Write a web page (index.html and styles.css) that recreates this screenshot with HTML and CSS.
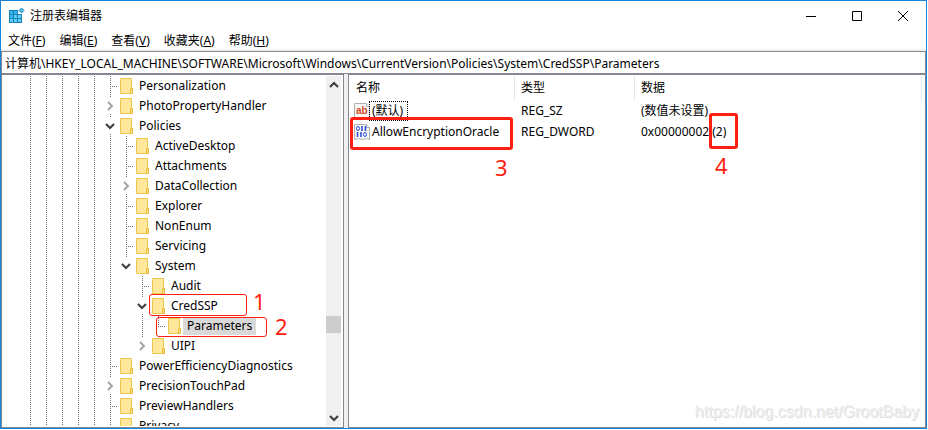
FILE: index.html
```html
<!DOCTYPE html>
<html lang="zh-CN">
<head>
<meta charset="utf-8">
<title>注册表编辑器</title>
<link rel="stylesheet" href="styles.css">
</head>
<body>
<svg class="defs" aria-hidden="true">
  <symbol id="folder" viewBox="0 0 14 16">
    <path d="M.5.5h11v10h1v5H.5z" fill="#ffe79b" stroke="#ebc94e"/>
    <path d="M10.500 10.500h2v5h-2z" fill="#ffe08a" stroke="#e8bd3c"/>
  </symbol>
  <symbol id="right" viewBox="0 0 8 10"><path d="M2 1l4 4-4 4" fill="none" stroke="#a6a6a6" stroke-width="2"/></symbol>
  <symbol id="down" viewBox="0 0 10 8"><path d="M1 2l4 4 4-4" fill="none" stroke="#404040" stroke-width="2.200"/></symbol>
  <symbol id="page" viewBox="0 0 16 16">
    <path d="M.5.5h12l3 3v12l-3-1-4 1-4-1-4 1z" fill="#f8f8f8" stroke="#b0b0b0"/>
    <path d="M12.500.5v3h3" fill="#fff" stroke="#b0b0b0"/>
  </symbol>
</svg>
<div class="window">
  <header class="title-bar">
    <svg class="app-icon" viewBox="0 0 16 16" aria-hidden="true">
      <path d="M0 2h9v4h4v9H0z" fill="#1583b8"/>
      <path d="M1 3h3v3H1zM5 3h3v3H5zM1 7h3v3H1z" fill="#35b4ee"/>
      <path d="M5 7h3v3H5zM9 7h3v3H9zM1 11h3v3H1zM5 11h3v3H5zM9 11h3v3H9z" fill="#62cdf8"/>
      <path d="M12.500 0L15 2.500 12.500 5 10 2.500z" fill="#55bfe8" stroke="#1583b8"/>
    </svg>
    <h1>注册表编辑器</h1>
    <div class="window-buttons">
      <button aria-label="最小化"><svg width="10" height="10"><path d="M0 5.500h10" stroke="#000"/></svg></button>
      <button aria-label="最大化"><svg width="10" height="10"><path d="M.5.5h9v9h-9z" fill="none" stroke="#000"/></svg></button>
      <button aria-label="关闭"><svg width="10" height="10"><path d="M0 0l10 10M10 0L0 10" stroke="#000"/></svg></button>
    </div>
  </header>
  <nav class="menu-bar">
    <button>文件(<u>F</u>)</button>
    <button>编辑(<u>E</u>)</button>
    <button>查看(<u>V</u>)</button>
    <button>收藏夹(<u>A</u>)</button>
    <button>帮助(<u>H</u>)</button>
  </nav>
  <input class="address" aria-label="地址" value="计算机\HKEY_LOCAL_MACHINE\SOFTWARE\Microsoft\Windows\CurrentVersion\Policies\System\CredSSP\Parameters">
  <main class="panes">
    <section class="tree-pane">
      <div class="tree-view">
        <div class="ancestors"></div>
        <ul class="tree">
          <li><div class="row"><i class="stub"></i><svg class="folder"><use href="#folder"/></svg><span>Personalization</span></div></li>
          <li><div class="row"><button class="toggle" aria-label="展开"><svg width="8" height="10"><use href="#right"/></svg></button><svg class="folder"><use href="#folder"/></svg><span>PhotoPropertyHandler</span></div></li>
          <li><div class="row"><button class="toggle" aria-label="折叠"><svg width="10" height="8"><use href="#down"/></svg></button><svg class="folder"><use href="#folder"/></svg><span>Policies</span></div>
            <ul>
              <li><div class="row"><i class="stub"></i><svg class="folder"><use href="#folder"/></svg><span>ActiveDesktop</span></div></li>
              <li><div class="row"><i class="stub"></i><svg class="folder"><use href="#folder"/></svg><span>Attachments</span></div></li>
              <li><div class="row"><button class="toggle" aria-label="展开"><svg width="8" height="10"><use href="#right"/></svg></button><svg class="folder"><use href="#folder"/></svg><span>DataCollection</span></div></li>
              <li><div class="row"><i class="stub"></i><svg class="folder"><use href="#folder"/></svg><span>Explorer</span></div></li>
              <li><div class="row"><i class="stub"></i><svg class="folder"><use href="#folder"/></svg><span>NonEnum</span></div></li>
              <li><div class="row"><i class="stub"></i><svg class="folder"><use href="#folder"/></svg><span>Servicing</span></div></li>
              <li><div class="row"><button class="toggle" aria-label="折叠"><svg width="10" height="8"><use href="#down"/></svg></button><svg class="folder"><use href="#folder"/></svg><span>System</span></div>
                <ul>
                  <li><div class="row"><i class="stub"></i><svg class="folder"><use href="#folder"/></svg><span>Audit</span></div></li>
                  <li><div class="row"><button class="toggle" aria-label="折叠"><svg width="10" height="8"><use href="#down"/></svg></button><svg class="folder"><use href="#folder"/></svg><span>CredSSP</span></div>
                    <ul>
                      <li><div class="row"><i class="stub"></i><svg class="folder"><use href="#folder"/></svg><span class="selected">Parameters</span></div></li>
                    </ul>
                  </li>
                  <li><div class="row"><button class="toggle" aria-label="展开"><svg width="8" height="10"><use href="#right"/></svg></button><svg class="folder"><use href="#folder"/></svg><span>UIPI</span></div></li>
                </ul>
              </li>
            </ul>
          </li>
          <li><div class="row"><i class="stub"></i><svg class="folder"><use href="#folder"/></svg><span>PowerEfficiencyDiagnostics</span></div></li>
          <li><div class="row"><button class="toggle" aria-label="展开"><svg width="8" height="10"><use href="#right"/></svg></button><svg class="folder"><use href="#folder"/></svg><span>PrecisionTouchPad</span></div></li>
          <li><div class="row"><i class="stub"></i><svg class="folder"><use href="#folder"/></svg><span>PreviewHandlers</span></div></li>
          <li><div class="row"><i class="stub"></i><svg class="folder"><use href="#folder"/></svg><span>Privacy</span></div></li>
        </ul>
      </div>
      <div class="scrollbar">
        <button aria-label="向上滚动"><svg class="flip" width="10" height="8"><use href="#down"/></svg></button>
        <div class="track"><div class="thumb"></div></div>
        <button aria-label="向下滚动"><svg width="10" height="8"><use href="#down"/></svg></button>
      </div>
    </section>
    <section class="list-pane">
      <table>
        <colgroup><col class="col-name"><col class="col-type"><col class="col-data"></colgroup>
        <thead><tr><th>名称</th><th>类型</th><th>数据</th></tr></thead>
        <tbody>
          <tr>
            <td><div class="value"><svg width="16" height="16"><use href="#page"/><text class="glyph-ab" x="2" y="11">ab</text></svg><span class="focused">(默认)</span></div></td>
            <td>REG_SZ</td><td>(数值未设置)</td>
          </tr>
          <tr>
            <td><div class="value"><svg width="16" height="16"><use href="#page"/><g fill="none" stroke="#2747d8"><ellipse cx="4" cy="4.500" rx="1.500" ry="2"/><ellipse cx="11" cy="10.500" rx="1.500" ry="2"/><path d="M8 2v5M11.500 2v5M3.500 8v5M7 8v5" stroke-width="1.500"/></g></svg><span>AllowEncryptionOracle</span></div></td>
            <td>REG_DWORD</td><td>0x00000002 (2)</td>
          </tr>
        </tbody>
      </table>
    </section>
  </main>
  <div class="mark mark-1"></div><b class="num num-1">1</b>
  <div class="mark mark-2"></div><b class="num num-2">2</b>
  <div class="mark thick mark-3"></div><b class="num num-3">3</b>
  <div class="mark thick mark-4"></div><b class="num num-4">4</b>
  <div class="watermark">https://blog.csdn.net/GrootBaby</div>
</div>
</body>
</html>
```
FILE: styles.css
```css
* { box-sizing: border-box; }

body {
  margin: 0;
  padding: 0 1px 1px 0;
  height: 100vh;
  overflow: hidden;
  background: #fff;
  color: #000;
  font: 12px/20px "Noto Sans", "Noto Sans CJK SC", sans-serif;
}

button {
  display: flex;
  align-items: center;
  justify-content: center;
  padding: 0;
  border: 0;
  background: none;
  color: inherit;
  font: inherit;
}

ul { margin: 0; padding: 0; list-style: none; }
.defs { display: none; }

.window {
  position: relative;
  display: flex;
  flex-direction: column;
  height: 100%;
  border: 1px solid #1883d7;
}

.title-bar { display: flex; align-items: center; height: 30px; padding-left: 8px; }
.app-icon { width: 16px; height: 16px; margin-right: 5px; }
.title-bar h1 { flex: 1; margin: 0; font-size: 12px; font-weight: 400; }
.window-buttons { display: flex; }
.window-buttons button { width: 46px; height: 28px; }

.menu-bar {
  display: flex;
  gap: 14px;
  height: 20px;
  padding: 1px 0 0 7px;
  border-bottom: 2px solid #f0f0f0;
}
.menu-bar button { height: 18px; }

.address {
  width: 100%;
  height: 23px;
  padding: 0 3px;
  border: 1px solid #828790;
  outline: 0;
  background: #fff;
  color: inherit;
  font: inherit;
}

.panes { display: flex; flex: 1; min-height: 0; background: #f0f0f0; }

.tree-pane {
  display: flex;
  width: 343px;
  padding: 1px 2px 1px 1px;
  border: 1px solid #828790;
  background: #fff;
}
.tree-view { display: flex; flex: 1; overflow: hidden; padding-left: 19px; }
.ancestors {
  flex: none;
  width: 80px;
  background:
    repeating-linear-gradient(90deg, #fff 0 8px, transparent 8px 9px, #fff 9px 16px),
    repeating-linear-gradient(#707070 0 1px, #fff 1px 2px);
}
.tree { flex: 1; }
.tree ul { margin-left: 16px; }
.tree li {
  background: repeating-linear-gradient(#707070 0 1px, #fff 1px 2px) 8px 0 / 1px 100% no-repeat;
}
.tree ul > li:last-child { background-size: 1px 10px; }

.row { display: flex; align-items: center; height: 20px; }
.stub {
  width: 8px;
  height: 1px;
  margin-left: 8px;
  background: repeating-linear-gradient(90deg, #707070 0 1px, #fff 1px 2px);
}
.toggle { width: 16px; height: 16px; background: #fff; }
.folder { width: 14px; height: 16px; margin: 0 1px 0 2px; }
.row span { padding: 0 4px; line-height: 18px; white-space: nowrap; }
.row .selected { background: #d9d9d9; }

.scrollbar { display: flex; flex-direction: column; width: 15px; background: #f0f0f0; }
.scrollbar button { height: 17px; }
.flip { transform: rotate(180deg); }
.track { display: flex; flex: 1; flex-direction: column; justify-content: flex-end; padding-bottom: 76px; }
.thumb { height: 17px; background: #cdcdcd; }

.list-pane {
  flex: 1;
  margin-left: 4px;
  padding-top: 1px;
  border: 1px solid #828790;
  background: #fff;
  overflow: hidden;
}
table { width: 573px; table-layout: fixed; border-collapse: separate; border-spacing: 0; }
.col-name { width: 166px; }
.col-type { width: 120px; }
th, td { padding: 0 0 0 6px; text-align: left; font-weight: 400; white-space: nowrap; }
th { height: 24px; border-right: 1px solid #e5e5e5; }
td { height: 21px; }
th:first-child { padding-left: 7px; }
td:first-child { padding-left: 5px; }
.value { display: flex; align-items: center; }
.value span { padding: 0 2px; line-height: 18px; }
.value .focused { outline: 1px dotted #000; padding-right: 4px; }
.glyph-ab { fill: #d04a28; font: bold 10px "Liberation Sans", sans-serif; }

.mark { position: absolute; border: 1px solid #ff1e10; border-radius: 3px; }
.thick { border-width: 3px; }
.mark-1 { left: 148px; top: 293px; width: 98px; height: 22px; }
.mark-2 { left: 155px; top: 316px; width: 111px; height: 20px; }
.mark-3 { left: 349px; top: 116px; width: 163px; height: 33px; }
.mark-4 { left: 708px; top: 112px; width: 29px; height: 36px; }
.num { position: absolute; color: #ff1e10; font-size: 22px; font-weight: 400; line-height: 24px; }
.num-1 { left: 252px; top: 288px; }
.num-2 { left: 274px; top: 313px; }
.num-3 { left: 494px; top: 154px; }
.num-4 { left: 714px; top: 152px; }

.watermark {
  position: absolute;
  right: 7px;
  bottom: 6px;
  color: #eee;
  font: 16px/20px "Liberation Sans", sans-serif;
  text-shadow: 1px 1px 0 #dedede;
}
```
